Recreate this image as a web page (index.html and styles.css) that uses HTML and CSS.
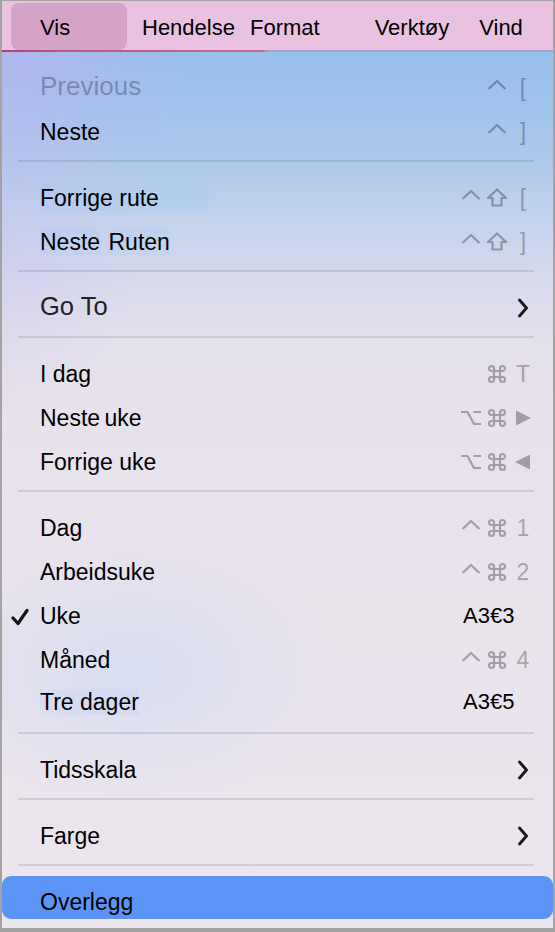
FILE: index.html
```html
<!DOCTYPE html>
<html lang="no">
<head>
<meta charset="utf-8">
<title>Vis-meny</title>
<link rel="stylesheet" href="styles.css">
</head>
<body>
<div class="frame">
  <nav class="menubar">
    <span class="mb-item mb-vis">Vis</span>
    <span class="mb-item mb-hendelse">Hendelse</span>
    <span class="mb-item mb-format">Format</span>
    <span class="mb-item mb-verktoy">Verktøy</span>
    <span class="mb-item mb-vind">Vind</span>
  </nav>

  <div class="dropdown">
    <div class="group">
      <div class="row">
        <span class="check-cell"></span>
        <span class="label big disabled">Previous</span>
        <span class="keys"><span class="k"></span><span class="k"><svg class="ic" viewBox="0 0 20 20"><path d="M1.5 11 L10 3 L18.5 11"/></svg></span><span class="k">[</span></span>
      </div>
      <div class="row">
        <span class="check-cell"></span>
        <span class="label">Neste</span>
        <span class="keys"><span class="k"></span><span class="k"><svg class="ic" viewBox="0 0 20 20"><path d="M1.5 11 L10 3 L18.5 11"/></svg></span><span class="k">]</span></span>
      </div>
    </div>
    <div class="sep"></div>

    <div class="group">
      <div class="row">
        <span class="check-cell"></span>
        <span class="label"><span class="tint tint-wide">Forrige rute</span></span>
        <span class="keys"><span class="k"><svg class="ic" viewBox="0 0 20 20"><path d="M1.5 11 L10 3 L18.5 11"/></svg></span><span class="k"><svg class="ic ic-wide" viewBox="0 0 22 20"><path d="M11 1.5 L20 10 H15.5 V17.5 H6.5 V10 H2 Z"/></svg></span><span class="k">[</span></span>
      </div>
      <div class="row">
        <span class="check-cell"></span>
        <span class="label"><span class="tint">Neste</span> <span class="tint gap">Ruten</span></span>
        <span class="keys"><span class="k"><svg class="ic" viewBox="0 0 20 20"><path d="M1.5 11 L10 3 L18.5 11"/></svg></span><span class="k"><svg class="ic ic-wide" viewBox="0 0 22 20"><path d="M11 1.5 L20 10 H15.5 V17.5 H6.5 V10 H2 Z"/></svg></span><span class="k">]</span></span>
      </div>
    </div>
    <div class="sep"></div>

    <div class="group">
      <div class="row">
        <span class="check-cell"></span>
        <span class="label goto">Go To</span>
        <span class="keys"><span class="k"></span><span class="k"></span><span class="k"><svg class="chev" viewBox="0 0 12 20"><path d="M2.5 2 L9.5 10 L2.5 18"/></svg></span></span>
      </div>
    </div>
    <div class="sep"></div>

    <div class="group">
      <div class="row">
        <span class="check-cell"></span>
        <span class="label">I dag</span>
        <span class="keys"><span class="k"></span><span class="k"><svg class="ic" viewBox="0 0 20 20"><path d="M7 7 V4.5 A2.5 2.5 0 1 0 4.5 7 H15.5 A2.5 2.5 0 1 0 13 4.5 V15.5 A2.5 2.5 0 1 0 15.5 13 H4.5 A2.5 2.5 0 1 0 7 15.5 Z"/></svg></span><span class="k">T</span></span>
      </div>
      <div class="row">
        <span class="check-cell"></span>
        <span class="label">Neste<span class="narrow"> </span>uke</span>
        <span class="keys"><span class="k"><svg class="ic ic-wide" viewBox="0 0 22 20"><path d="M1 4 H7.5 L14 16 H21 M13.5 4 H21"/></svg></span><span class="k"><svg class="ic" viewBox="0 0 20 20"><path d="M7 7 V4.5 A2.5 2.5 0 1 0 4.5 7 H15.5 A2.5 2.5 0 1 0 13 4.5 V15.5 A2.5 2.5 0 1 0 15.5 13 H4.5 A2.5 2.5 0 1 0 7 15.5 Z"/></svg></span><span class="k"><svg class="ic tri" viewBox="0 0 20 20"><path d="M3 2.5 L18 10 L3 17.5 Z"/></svg></span></span>
      </div>
      <div class="row">
        <span class="check-cell"></span>
        <span class="label">Forrige uke</span>
        <span class="keys"><span class="k"><svg class="ic ic-wide" viewBox="0 0 22 20"><path d="M1 4 H7.5 L14 16 H21 M13.5 4 H21"/></svg></span><span class="k"><svg class="ic" viewBox="0 0 20 20"><path d="M7 7 V4.5 A2.5 2.5 0 1 0 4.5 7 H15.5 A2.5 2.5 0 1 0 13 4.5 V15.5 A2.5 2.5 0 1 0 15.5 13 H4.5 A2.5 2.5 0 1 0 7 15.5 Z"/></svg></span><span class="k"><svg class="ic tri" viewBox="0 0 20 20"><path d="M17 2.5 L2 10 L17 17.5 Z"/></svg></span></span>
      </div>
    </div>
    <div class="sep"></div>

    <div class="group">
      <div class="row">
        <span class="check-cell"></span>
        <span class="label">Dag</span>
        <span class="keys"><span class="k"><svg class="ic" viewBox="0 0 20 20"><path d="M1.5 11 L10 3 L18.5 11"/></svg></span><span class="k"><svg class="ic" viewBox="0 0 20 20"><path d="M7 7 V4.5 A2.5 2.5 0 1 0 4.5 7 H15.5 A2.5 2.5 0 1 0 13 4.5 V15.5 A2.5 2.5 0 1 0 15.5 13 H4.5 A2.5 2.5 0 1 0 7 15.5 Z"/></svg></span><span class="k">1</span></span>
      </div>
      <div class="row">
        <span class="check-cell"></span>
        <span class="label">Arbeidsuke</span>
        <span class="keys"><span class="k"><svg class="ic" viewBox="0 0 20 20"><path d="M1.5 11 L10 3 L18.5 11"/></svg></span><span class="k"><svg class="ic" viewBox="0 0 20 20"><path d="M7 7 V4.5 A2.5 2.5 0 1 0 4.5 7 H15.5 A2.5 2.5 0 1 0 13 4.5 V15.5 A2.5 2.5 0 1 0 15.5 13 H4.5 A2.5 2.5 0 1 0 7 15.5 Z"/></svg></span><span class="k">2</span></span>
      </div>
      <div class="row">
        <span class="check-cell"><svg class="check" viewBox="0 0 18 18"><path d="M2 10 L7 15.5 L16 2.5"/></svg></span>
        <span class="label">Uke</span>
        <span class="keys"><span class="k-text">A3€3</span></span>
      </div>
      <div class="row">
        <span class="check-cell"></span>
        <span class="label">Måned</span>
        <span class="keys"><span class="k"><svg class="ic" viewBox="0 0 20 20"><path d="M1.5 11 L10 3 L18.5 11"/></svg></span><span class="k"><svg class="ic" viewBox="0 0 20 20"><path d="M7 7 V4.5 A2.5 2.5 0 1 0 4.5 7 H15.5 A2.5 2.5 0 1 0 13 4.5 V15.5 A2.5 2.5 0 1 0 15.5 13 H4.5 A2.5 2.5 0 1 0 7 15.5 Z"/></svg></span><span class="k">4</span></span>
      </div>
      <div class="row row-up">
        <span class="check-cell"></span>
        <span class="label"><span class="tint tint-soft">Tre dager</span></span>
        <span class="keys"><span class="k-text">A3€5</span></span>
      </div>
    </div>
    <div class="sep"></div>

    <div class="group">
      <div class="row">
        <span class="check-cell"></span>
        <span class="label">Tidsskala</span>
        <span class="keys"><span class="k"></span><span class="k"></span><span class="k"><svg class="chev" viewBox="0 0 12 20"><path d="M2.5 2 L9.5 10 L2.5 18"/></svg></span></span>
      </div>
    </div>
    <div class="sep"></div>

    <div class="group">
      <div class="row">
        <span class="check-cell"></span>
        <span class="label">Farge</span>
        <span class="keys"><span class="k"></span><span class="k"></span><span class="k"><svg class="chev" viewBox="0 0 12 20"><path d="M2.5 2 L9.5 10 L2.5 18"/></svg></span></span>
      </div>
    </div>
    <div class="sep"></div>

    <div class="selected">Overlegg</div>
  </div>
</div>
</body>
</html>
```

FILE: styles.css
```css
html, body {
  margin: 0;
  padding: 0;
}

body {
  width: 555px;
  height: 932px;
  overflow: hidden;
  background: #a3a3a3;
  font-family: "Liberation Sans", Arial, sans-serif;
  color: #000;
}

.frame {
  box-sizing: border-box;
  width: 555px;
  height: 932px;
  border-style: solid;
  border-color: #a3a3a3;
  border-width: 1px 2px 4px 2px;
  display: flex;
  flex-direction: column;
  overflow: hidden;
}

/* ---------- menu bar ---------- */
.menubar {
  box-sizing: border-box;
  height: 51px;
  flex: none;
  display: flex;
  align-items: flex-start;
  background:
    linear-gradient(to right, #a5467c 0, #c0588a 60px, #c86a93 260px, #a3a6bc 266px, #a3a6bc 100%) left bottom / 100% 2px no-repeat,
    #e9c2e2;
}

.mb-item {
  box-sizing: border-box;
  height: 47px;
  margin-top: 2px;
  padding-top: 3px;
  line-height: 44px;
  font-size: 22px;
  white-space: nowrap;
}

.mb-vis {
  width: 116px;
  margin-left: 9px;
  padding-left: 29px;
  background: #d5a3c7;
  border-radius: 8px;
}

.mb-hendelse { margin-left: 15px; }
.mb-format { margin-left: 15px; }
.mb-verktoy { margin-left: 55px; }
.mb-vind { margin-left: 30px; }

/* ---------- dropdown ---------- */
.dropdown {
  flex: 1;
  display: flex;
  flex-direction: column;
  background:
    radial-gradient(ellipse 190px 150px at 0 0, rgba(196, 176, 240, 0.55), rgba(196, 176, 240, 0)),
    radial-gradient(ellipse 140px 160px at 0 190px, rgba(200, 190, 240, 0.35), rgba(200, 190, 240, 0)),
    radial-gradient(ellipse 200px 130px at 130px 620px, rgba(205, 218, 246, 0.6), rgba(205, 218, 246, 0)),
    linear-gradient(180deg, #98bfea 0, #9fc3ec 50px, #aec9ea 110px, #c3d3ec 170px, #d8daec 230px, #e4e0ec 290px, #e8e2ec 400px, #ebe5ee 100%);
}

.group {
  padding: 14px 0 6px;
}

.sep {
  height: 2px;
  margin: 0 19px 0 16px;
  background: rgba(40, 40, 72, 0.13);
  flex: none;
}

.row {
  display: grid;
  grid-template-columns: 38px 1fr 78px;
  height: 44px;
  line-height: 44px;
  padding-right: 17px;
  font-size: 23px;
  align-items: center;
}

.row-up {
  margin-top: -2px;
  margin-bottom: 2px;
}

.label {
  white-space: nowrap;
}

.label.big {
  align-self: start;
  font-size: 26px;
  line-height: 40px;
}

.label.goto {
  align-self: start;
  font-size: 25.5px;
  line-height: 41px;
  color: #222;
}

.narrow {
  letter-spacing: -2px;
}

.disabled {
  color: rgba(0, 0, 0, 0.28);
}

.tint {
  background: rgba(140, 195, 255, 0.14);
}

.tint-wide {
  padding-right: 50px;
}

.tint.gap {
  margin-left: 2px;
}

.tint-soft {
  background: rgba(170, 190, 250, 0.14);
}

.check-cell {
  display: flex;
  align-items: center;
  height: 44px;
}

.check {
  width: 18px;
  height: 18px;
  margin-left: 9px;
  margin-top: 2px;
  fill: none;
  stroke: #111;
  stroke-width: 3.2;
  stroke-linecap: round;
  stroke-linejoin: round;
}

.keys {
  display: grid;
  grid-template-columns: repeat(3, 26px);
  height: 44px;
  color: rgba(0, 0, 0, 0.3);
  font-size: 23px;
}

.k {
  display: flex;
  align-items: center;
  justify-content: center;
  height: 44px;
  line-height: 44px;
}

.k-text {
  grid-column: 1 / -1;
  padding-left: 5px;
  color: #000;
  font-size: 22px;
  line-height: 44px;
}

.ic {
  width: 20px;
  height: 20px;
  fill: none;
  stroke: currentColor;
  stroke-width: 2.2;
  stroke-linejoin: round;
}

.ic-wide {
  width: 22px;
}

.ic.tri {
  fill: currentColor;
  stroke: none;
}

.chev {
  width: 12px;
  height: 20px;
  fill: none;
  stroke: #1a1a1a;
  stroke-width: 2.9;
  stroke-linecap: round;
  stroke-linejoin: round;
}

.selected {
  box-sizing: border-box;
  height: 43px;
  margin-top: 10px;
  padding-top: 10px;
  padding-left: 38px;
  line-height: 33px;
  font-size: 23px;
  background: #5c94f5;
  border-radius: 9px;
  color: #000;
}
```
